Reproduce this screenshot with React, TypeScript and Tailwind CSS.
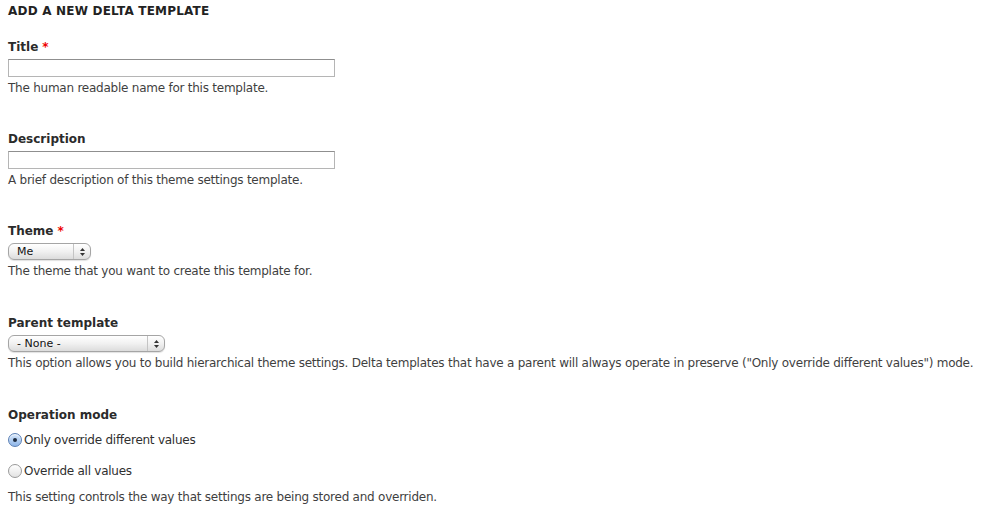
import React from "react";

const font = { fontFamily: '"DejaVu Sans", Verdana, sans-serif' };

const Arrows = () => (
  <svg width="7" height="10" viewBox="0 0 7 10" className="block">
    <path d="M3.5 1 L6 4 H1 Z" fill="#333" />
    <path d="M3.5 9 L6 6 H1 Z" fill="#333" />
  </svg>
);

const FakeSelect = ({ value, width }: { value: string; width: string }) => (
  <div
    className={`${width} h-[17px] flex items-center rounded-[6px] border border-[#a5a5a5] bg-gradient-to-b from-[#ffffff] via-[#f1f1f1] to-[#dcdcdc] shadow-[0_1px_1px_rgba(0,0,0,0.12)]`}
  >
    <span className="flex-1 pl-[8px] text-[11px] leading-none text-[#111]">{value}</span>
    <span className="h-full w-[17px] border-l border-[#c4c4c4] flex items-center justify-center">
      <Arrows />
    </span>
  </div>
);

const Radio = ({ checked }: { checked?: boolean }) =>
  checked ? (
    <span className="w-[14px] h-[14px] rounded-full border border-[#5a7fb5] bg-gradient-to-b from-[#d5e6fa] to-[#8fb6e8] flex items-center justify-center shadow-[inset_0_1px_1px_rgba(255,255,255,0.8)]">
      <span className="w-[4px] h-[4px] rounded-full bg-[#1c2a3e]" />
    </span>
  ) : (
    <span className="w-[14px] h-[14px] rounded-full border border-[#9a9a9a] bg-gradient-to-b from-[#ffffff] to-[#e3e3e3]" />
  );

const Label = ({ children, required }: { children: React.ReactNode; required?: boolean }) => (
  <div className="text-[12px] font-bold text-[#2b2b2b] leading-[16px] h-[16px]">
    {children}
    {required && <span className="text-[#e00] ml-[4px]">*</span>}
  </div>
);

const Help = ({ children }: { children: React.ReactNode }) => (
  <div className="text-[12px] text-[#3f3f3f] leading-[16px] mt-[3px] tracking-[-0.24px] whitespace-nowrap">
    {children}
  </div>
);

export default function App() {
  return (
    <div className="w-[1006px] h-[517px] bg-white px-[8px] pt-[3px]" style={font}>
      <h2 className="text-[12px] font-bold uppercase text-[#222] leading-[16px] tracking-[0.2px]">
        Add a new Delta template
      </h2>

      <div className="mt-[20px] h-[92px]">
        <Label required>Title</Label>
        <input className="mt-[4px] block w-[327px] h-[18px] border border-[#b5b5b5] border-t-[#8f8f8f] bg-white" />
        <Help>The human readable name for this template.</Help>
      </div>

      <div className="h-[92px]">
        <Label>Description</Label>
        <input className="mt-[4px] block w-[327px] h-[18px] border border-[#b5b5b5] border-t-[#8f8f8f] bg-white" />
        <Help>A brief description of this theme settings template.</Help>
      </div>

      <div className="h-[92px]">
        <Label required>Theme</Label>
        <div className="mt-[4px]">
          <FakeSelect value="Me" width="w-[83px]" />
        </div>
        <Help>The theme that you want to create this template for.</Help>
      </div>

      <div className="h-[92px]">
        <Label>Parent template</Label>
        <div className="mt-[4px]">
          <FakeSelect value="- None -" width="w-[157px]" />
        </div>
        <Help>
          This option allows you to build hierarchical theme settings. Delta templates that have a parent will always operate in preserve ("Only override different values") mode.
        </Help>
      </div>

      <div>
        <Label>Operation mode</Label>
        <div className="mt-[9px] flex items-center gap-[2px] text-[12px] text-[#2f2f2f] leading-[16px] tracking-[-0.25px]">
          <Radio checked />
          <span>Only override different values</span>
        </div>
        <div className="mt-[15px] flex items-center gap-[2px] text-[12px] text-[#2f2f2f] leading-[16px] tracking-[-0.25px]">
          <Radio />
          <span>Override all values</span>
        </div>
        <Help>
          <span className="block mt-[10px]">This setting controls the way that settings are being stored and overriden.</span>
        </Help>
      </div>
    </div>
  );
}
